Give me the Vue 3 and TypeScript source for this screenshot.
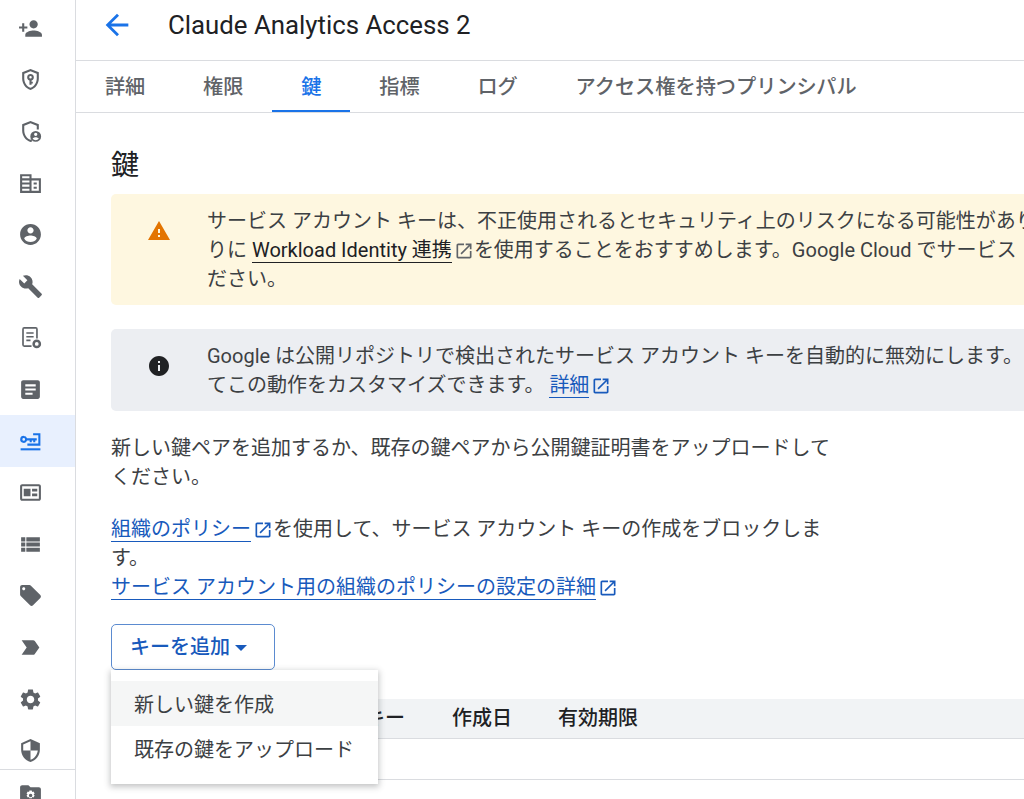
<script setup lang="ts">
interface NavIcon { id: string; paths: string[]; active?: boolean }

const navIcons: NavIcon[] = [
  { id: 'add', paths: ['M15 12c2.21 0 4-1.79 4-4s-1.79-4-4-4-4 1.79-4 4 1.79 4 4 4zm-9-2V7H4v3H1v2h3v3h2v-3h3v-2H6zm9 4c-2.67 0-8 1.34-8 4v2h16v-2c0-2.66-5.33-4-8-4z'] },
  { id: 'shieldkey', paths: ['M12 2 4 5v6c0 5.05 3.4 9.75 8 11 4.6-1.25 8-5.95 8-11V5l-8-3zm6 9c0 4-2.55 7.7-6 8.9-3.45-1.2-6-4.9-6-8.9V6.4l6-2.25 6 2.25V11z', 'M12 6.6a3.2 3.2 0 0 0-1 6.24V17h2v-1.2h1.2v-1.6H13v-1.36A3.2 3.2 0 0 0 12 6.6zm0 2a1.2 1.2 0 1 1 0 2.4 1.2 1.2 0 0 1 0-2.4z'] },
  { id: 'shieldperson', paths: ['M12 2 4 5v6c0 5.05 3.4 9.75 8 11 .6-.16 1.2-.4 1.75-.7l-1-1.75c-.25.13-.5.24-.75.33-3.45-1.2-6-4.9-6-8.9V6.4l6-2.25 6 2.25v3.7h2V5l-8-3z', 'M17 11.5a5.2 5.2 0 1 0 0 10.4 5.2 5.2 0 0 0 0-10.4zm0 1.6a1.6 1.6 0 1 1 0 3.2 1.6 1.6 0 0 1 0-3.2zm0 7.2c-1.2 0-2.2-.5-2.9-1.4.1-.9 2-1.4 2.9-1.4s2.8.5 2.9 1.4c-.7.9-1.7 1.4-2.9 1.4z'] },
  { id: 'domain', paths: ['M2 3h11v4h9v14H2V3zm2 2v2h7V5H4zm0 4v2h7V9H4zm0 4v2h7v-2H4zm0 4v2h7v-2H4zm9-8v10h7V9h-7zm2 2h3v2h-3v-2zm0 4h3v2h-3v-2z'] },
  { id: 'account', paths: ['M12 2C6.48 2 2 6.48 2 12s4.48 10 10 10 10-4.48 10-10S17.52 2 12 2zm0 3c1.66 0 3 1.34 3 3s-1.34 3-3 3-3-1.34-3-3 1.34-3 3-3zm0 14.2c-2.5 0-4.71-1.28-6-3.22.03-1.99 4-3.08 6-3.08 1.99 0 5.97 1.09 6 3.08-1.29 1.94-3.5 3.22-6 3.22z'] },
  { id: 'build', paths: ['M22.7 19l-9.1-9.1c.9-2.3.4-5-1.5-6.9-2-2-5-2.4-7.4-1.3L9 6 6 9 1.6 4.7C.4 7.1.9 10.1 2.9 12.1c1.9 1.9 4.6 2.4 6.9 1.5l9.1 9.1c.4.4 1 .4 1.4 0l2.3-2.3c.5-.4.5-1.1.1-1.4z'] },
  { id: 'doc', paths: ['M6 2h11a2 2 0 0 1 2 2v9h-1.6V3.6H5.6v15.8H13V21H6a2 2 0 0 1-2-2V4a2 2 0 0 1 2-2z', 'M8 7h7v1.5H8zM8 10.5h7V12H8zM8 14h4v1.5H8z', 'M18 14a4.2 4.2 0 1 0 0 8.4 4.2 4.2 0 0 0 0-8.4zm0 2.4a1.8 1.8 0 1 1 0 3.6 1.8 1.8 0 0 1 0-3.6z'] },
  { id: 'article', paths: ['M19 3H5c-1.1 0-2 .9-2 2v14c0 1.1.9 2 2 2h14c1.1 0 2-.9 2-2V5c0-1.1-.9-2-2-2zm-5 14H7v-2h7v2zm3-4H7v-2h10v2zm0-4H7V7h10v2z'] },
  { id: 'key', active: true, paths: ['M2.5 18.5h19v2h-19z', 'M14.5 4h7v12H9v-2h10.5V6h-5z', 'M5.5 6.6a3.4 3.4 0 0 1 3.2 2.3H18v2.2h-1.4v1.6h-2v-1.6h-1.4v1.6h-2v-1.6H8.7a3.4 3.4 0 1 1-3.2-4.5zm0 2.1a1.3 1.3 0 1 0 0 2.6 1.3 1.3 0 0 0 0-2.6z'] },
  { id: 'card', paths: ['M20 4H4c-1.1 0-2 .9-2 2v12c0 1.1.9 2 2 2h16c1.1 0 2-.9 2-2V6c0-1.1-.9-2-2-2zm0 14H4V6h16v12zM5.5 8.5h6.5v7H5.5v-7zm8 0h5V11h-5V8.5zm0 4.5h5v2.5h-5V13z'] },
  { id: 'list', paths: ['M3 14h4v-4H3v4zm0 5h4v-4H3v4zM3 9h4V5H3v4zm5 5h13v-4H8v4zm0 5h13v-4H8v4zM8 5v4h13V5H8z'] },
  { id: 'tag', paths: ['M21.41 11.58l-9-9C12.05 2.22 11.55 2 11 2H4c-1.1 0-2 .9-2 2v7c0 .55.22 1.05.59 1.42l9 9c.36.36.86.58 1.41.58.55 0 1.05-.22 1.41-.59l7-7c.37-.36.59-.86.59-1.41 0-.55-.23-1.06-.59-1.42zM5.5 7C4.67 7 4 6.33 4 5.5S4.67 4 5.5 4 7 4.67 7 5.5 6.33 7 5.5 7z'] },
  { id: 'label', paths: ['M3.5 18.99l11 .01c.67 0 1.27-.33 1.63-.84L20.5 12l-4.37-6.16c-.36-.51-.96-.84-1.63-.84l-11 .01L8.34 12 3.5 18.99z'] },
  { id: 'settings', paths: ['M19.14 12.94c.04-.3.06-.61.06-.94 0-.32-.02-.64-.07-.94l2.03-1.58c.18-.14.23-.41.12-.61l-1.92-3.32c-.12-.22-.37-.29-.59-.22l-2.39.96c-.5-.38-1.03-.7-1.62-.94l-.36-2.54c-.04-.24-.24-.41-.48-.41h-3.84c-.24 0-.43.17-.47.41l-.36 2.54c-.59.24-1.13.57-1.62.94l-2.39-.96c-.22-.08-.47 0-.59.22L2.74 8.87c-.12.21-.08.47.12.61l2.03 1.58c-.05.3-.09.63-.09.94s.02.64.07.94l-2.03 1.58c-.18.14-.23.41-.12.61l1.92 3.32c.12.22.37.29.59.22l2.39-.96c.5.38 1.03.7 1.62.94l.36 2.54c.05.24.24.41.48.41h3.84c.24 0 .44-.17.47-.41l.36-2.54c.59-.24 1.13-.56 1.62-.94l2.39.96c.22.08.47 0 .59-.22l1.92-3.32c.12-.22.07-.47-.12-.61l-2.01-1.58zM12 15.6c-1.98 0-3.6-1.62-3.6-3.6s1.62-3.6 3.6-3.6 3.6 1.62 3.6 3.6-1.62 3.6-3.6 3.6z'] },
  { id: 'security', paths: ['M12 1L3 5v6c0 5.55 3.84 10.74 9 12 5.16-1.26 9-6.45 9-12V5l-9-4zm0 10.99h7c-.53 4.12-3.28 7.79-7 8.94V12H5V6.3l7-3.11v8.8z'] },
]

const folderPath = 'M10 4H4c-1.1 0-2 .9-2 2v12c0 1.1.9 2 2 2h16c1.1 0 2-.9 2-2V8c0-1.1-.9-2-2-2h-8l-2-2zm3.2 5.2.4 1.3 1.2-.5 1.2 2-1 .9 1 .9-1.2 2-1.2-.5-.4 1.3H11l-.4-1.3-1.2.5-1.2-2 1-.9-1-.9 1.2-2 1.2.5.4-1.3h2.2zm-1.1 3a1.7 1.7 0 1 0 0 3.4 1.7 1.7 0 0 0 0-3.4z'

const tabs: { label: string; active?: boolean }[] = [
  { label: '詳細' },
  { label: '権限' },
  { label: '鍵', active: true },
  { label: '指標' },
  { label: 'ログ' },
  { label: 'アクセス権を持つプリンシパル' },
]

const externalPath = 'M19 19H5V5h7V3H5c-1.11 0-2 .9-2 2v14c0 1.1.89 2 2 2h14c1.1 0 2-.9 2-2v-7h-2v7zM14 3v2h3.59l-9.83 9.83 1.41 1.41L19 6.41V10h2V3h-7z'
</script>

<template>
  <div class="page">
    <aside class="rail">
      <div v-for="icon in navIcons" :key="icon.id" class="rail-item" :class="{ active: icon.active }">
        <svg class="rail-icon" viewBox="0 0 24 24">
          <path v-for="(d, i) in icon.paths" :key="i" :d="d" fill-rule="evenodd" />
        </svg>
      </div>
      <div class="rail-bottom">
        <svg class="rail-icon" viewBox="0 0 24 24"><path :d="folderPath" fill-rule="evenodd" /></svg>
      </div>
    </aside>

    <main class="main">
      <header class="header">
        <svg class="back" viewBox="0 0 24 24"><path d="M20 11H7.83l5.59-5.59L12 4l-8 8 8 8 1.41-1.41L7.83 13H20v-2z" /></svg>
        <h1 class="title">Claude Analytics Access 2</h1>
      </header>

      <nav class="tabs">
        <div v-for="tab in tabs" :key="tab.label" class="tab" :class="{ active: tab.active }">{{ tab.label }}</div>
      </nav>

      <section class="content">
        <h2 class="heading">鍵</h2>

        <div class="banner warn">
          <div class="banner-icon">
            <svg viewBox="0 0 24 24"><path d="M1 21h22L12 2 1 21zm12-3h-2v-2h2v2zm0-4h-2v-4h2v4z" /></svg>
          </div>
          <div class="banner-text">
            サービス アカウント キーは、不正使用されるとセキュリティ上のリスクになる可能性があり<br />
            りに <span class="dark-link">Workload Identity 連携</span><svg class="ext dark" viewBox="0 0 24 24"><path :d="externalPath" /></svg>を使用することをおすすめします。Google Cloud でサービス<br />
            ださい。
          </div>
        </div>

        <div class="banner info">
          <div class="banner-icon">
            <svg viewBox="0 0 24 24"><path d="M12 2C6.48 2 2 6.48 2 12s4.48 10 10 10 10-4.48 10-10S17.52 2 12 2zm1 15h-2v-6h2v6zm0-8h-2V7h2v2z" /></svg>
          </div>
          <div class="banner-text">
            Google は公開リポジトリで検出されたサービス アカウント キーを自動的に無効にします。<br />
            てこの動作をカスタマイズできます。 <span class="link">詳細</span><svg class="ext" viewBox="0 0 24 24"><path :d="externalPath" /></svg>
          </div>
        </div>

        <p class="para first">新しい鍵ペアを追加するか、既存の鍵ペアから公開鍵証明書をアップロードしてください。</p>
        <p class="para second">
          <span class="link">組織のポリシー</span><svg class="ext" viewBox="0 0 24 24"><path :d="externalPath" /></svg>を使用して、サービス アカウント キーの作成をブロックします。<br />
          <span class="link">サービス アカウント用の組織のポリシーの設定の詳細</span><svg class="ext" viewBox="0 0 24 24"><path :d="externalPath" /></svg>
        </p>

        <div class="add-wrap">
          <button class="add-btn" type="button">キーを追加<span class="caret"></span></button>
          <div class="menu">
            <div class="menu-item hover">新しい鍵を作成</div>
            <div class="menu-item">既存の鍵をアップロード</div>
          </div>
        </div>

        <div class="table">
          <div class="thead">
            <span class="col-key">キー</span>
            <span class="col-date">作成日</span>
            <span class="col-exp">有効期限</span>
          </div>
          <div class="tbody"></div>
        </div>
      </section>
    </main>
  </div>
</template>

<style>
html, body { margin: 0; overflow: hidden; background: #fff; }
</style>

<style scoped>
.page {
  display: flex;
  width: 1024px;
  height: 799px;
  overflow: hidden;
  background: #fff;
  font-family: Roboto, "Noto Sans CJK JP", sans-serif;
  font-size: 20px;
  line-height: 29px;
  color: #3c4043;
}
.rail {
  flex: 0 0 76px;
  box-sizing: border-box;
  border-right: 1px solid #dadce0;
  padding-top: 2.5px;
  display: flex;
  flex-direction: column;
  overflow: hidden;
}
.rail-item {
  flex: 0 0 51.6px;
  display: flex;
  align-items: center;
  padding-left: 17.5px;
}
.rail-item.active { background: #e8f0fe; }
.rail-item.active .rail-icon { fill: #1a73e8; }
.rail-icon { width: 25px; height: 25px; fill: #5f6368; display: block; flex: none; }
.rail-bottom {
  flex: none;
  margin-top: -7px;
  border-top: 1px solid #dadce0;
  padding: 11px 0 0 17.5px;
  background: #fff;
}
.main { flex: 1 1 auto; min-width: 0; overflow: hidden; }
.header {
  height: 60px;
  box-sizing: content-box;
  border-bottom: 1px solid #dadce0;
  display: flex;
  align-items: center;
  padding-left: 24px;
}
.back { width: 34px; height: 34px; fill: #1a73e8; flex: none; margin-bottom: 10px; }
.title {
  margin: 0 0 10px 34px;
  font-size: 25.8px;
  line-height: 32px;
  font-weight: 400;
  color: #202124;
  white-space: nowrap;
}
.tabs {
  height: 51px;
  border-bottom: 1px solid #dadce0;
  display: flex;
}
.tab {
  padding: 2px 28.9px 0;
  box-sizing: border-box;
  display: flex;
  align-items: center;
  white-space: nowrap;
  color: #5f6368;
  position: relative;
  font-size: 20.2px;
  font-weight: 500;
}
.tab.active { color: #1a73e8; }
.tab.active::after {
  content: "";
  position: absolute;
  left: 0;
  right: 0;
  bottom: 0;
  height: 2px;
  background: #1a73e8;
}
.content { padding: 36px 0 0 35px; }
.heading {
  margin: 0 0 12px;
  font-size: 28px;
  line-height: 33px;
  font-weight: 400;
  color: #202124;
}
.banner {
  width: 1200px;
  box-sizing: border-box;
  display: flex;
  border-radius: 5px;
  padding: 13px 0 11px;
}
.warn { background: #fef7e0; }
.info { background: #eceef2; margin-top: 24px; }
.banner-icon {
  flex: 0 0 96px;
  display: flex;
  justify-content: center;
  padding-top: 12px;
}
.banner-icon svg { width: 24px; height: 24px; }
.warn .banner-icon svg { fill: #e37400; }
.info .banner-icon svg { fill: #202124; }
.banner-text { white-space: nowrap; color: #3c4043; }
.dark-link { color: #202124; border-bottom: 1px solid #202124; }
.link { color: #185abc; border-bottom: 1px solid #185abc; }
.ext {
  width: 20px;
  height: 20px;
  fill: #185abc;
  vertical-align: -4px;
  margin-left: 2px;
}
.ext.dark { fill: #5f6368; }
.para { margin: 0; width: 725px; }
.first { margin-top: 23px; }
.second { margin-top: 23px; }
.add-wrap { position: relative; margin-top: 22px; width: 267px; height: 46px; }
.add-btn {
  width: 164px;
  height: 46px;
  box-sizing: border-box;
  border: 1px solid #5b8bd0;
  border-radius: 5px;
  background: #fff;
  color: #185abc;
  font: inherit;
  font-weight: 500;
  padding: 0 0 0 18px;
  display: flex;
  align-items: center;
}
.caret {
  width: 0;
  height: 0;
  margin-left: 5px;
  margin-top: 2px;
  border-left: 6px solid transparent;
  border-right: 6px solid transparent;
  border-top: 6px solid #185abc;
}
.menu {
  position: absolute;
  z-index: 2;
  left: 0;
  top: 46px;
  width: 267px;
  height: 114px;
  box-sizing: border-box;
  padding-top: 11px;
  background: #fff;
  box-shadow: 0 2px 6px 1px rgba(60, 64, 67, .3);
}
.menu-item { height: 45px; padding: 3px 0 0 23px; box-sizing: border-box; display: flex; align-items: center; color: #3c4043; white-space: nowrap; }
.menu-item.hover { background: #f5f6f6; }
.table { margin-top: 29px; width: 1000px; }
.thead {
  height: 40px;
  box-sizing: border-box;
  background: #f1f3f5;
  border-bottom: 1px solid #dadce0;
  display: flex;
  align-items: center;
  padding-left: 254px;
  color: #202124;
  font-weight: 500;
  white-space: nowrap;
}
.col-key { width: 87px; }
.col-date { width: 106px; }
.tbody { height: 41px; border-bottom: 1px solid #dadce0; box-sizing: border-box; }
</style>
